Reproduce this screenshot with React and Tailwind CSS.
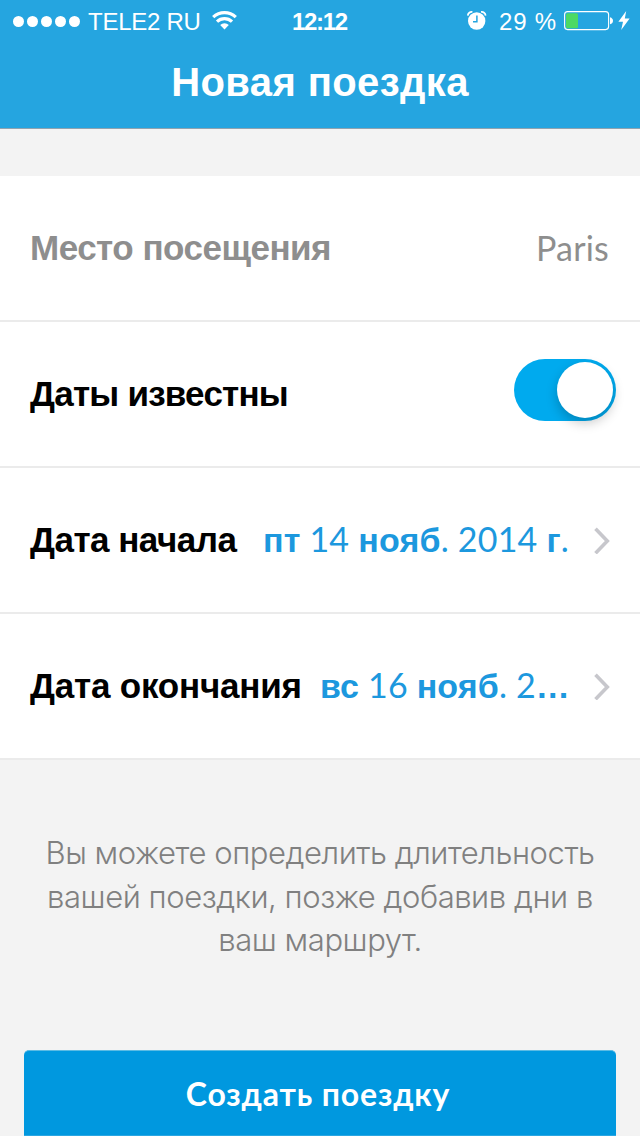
import { useState } from "react";

const carrierDots = [1, 2, 3, 4, 5];

function WifiIcon() {
  return (
    <svg width="26" height="20" viewBox="0 0 26 20" fill="none" stroke="white">
      <path d="M1.2 6.2 A16.4 16.4 0 0 1 23.8 6.2" strokeWidth="3.2" />
      <path d="M5 10.6 A10.8 10.8 0 0 1 20 10.6" strokeWidth="3.2" />
      <path d="M12.5 18.4 L8.2 14 A6 6 0 0 1 16.8 14 Z" fill="white" stroke="none" />
    </svg>
  );
}

function AlarmIcon() {
  return (
    <svg width="20" height="20" viewBox="0 0 20 20" fill="none">
      <circle cx="9.7" cy="10" r="8.7" fill="white" />
      <path d="M9.9 4.6 V10.8 H6" stroke="#25a5e0" strokeWidth="1.5" />
      <path d="M0.8 4.6 A4 4 0 0 1 5.4 0.9" stroke="white" strokeWidth="1.7" />
      <path d="M18.6 4.6 A4 4 0 0 0 14 0.9" stroke="white" strokeWidth="1.7" />
    </svg>
  );
}

function BatteryIcon() {
  return (
    <svg width="50" height="20" viewBox="0 0 50 20" fill="none">
      <rect x="0.6" y="0.6" width="44" height="18" rx="3" stroke="white" strokeWidth="1.1" />
      <rect x="2" y="2.2" width="12" height="15" rx="1.5" fill="#4cd964" />
      <path d="M46 6.2 Q49 7.2 49 9.7 Q49 12.2 46 13.2 Z" fill="white" />
    </svg>
  );
}

function BoltIcon() {
  return (
    <svg width="12" height="20" viewBox="0 0 12 20" fill="white">
      <path d="M8.2 0 L0.4 10.8 H5 L3.2 19 L11.6 7.6 H6.8 Z" />
    </svg>
  );
}

function Chevron() {
  return (
    <svg width="18" height="28" viewBox="0 0 18 28" fill="none">
      <path d="M2.5 2.8 L14.3 15 L2.5 27.2" stroke="#c7c7cc" strokeWidth="3.6" />
    </svg>
  );
}

function StatusBar() {
  return (
    <div className="grid h-10 grid-cols-[292px_56px_1fr] items-center text-[24px] leading-10">
      <div className="flex items-center pl-[13px]">
        <div className="flex gap-[3px]">
          {carrierDots.map((d) => (
            <span key={d} className="size-[11px] rounded-full bg-white" />
          ))}
        </div>
        <span className="ml-2 pt-0.5 whitespace-nowrap tracking-[-0.25px]">TELE2 RU</span>
        <span className="ml-[11px]">
          <WifiIcon />
        </span>
      </div>
      <span className="pt-0.5 font-bold tracking-[-1.3px]">12:12</span>
      <div className="flex items-center justify-end pr-[10px]">
        <AlarmIcon />
        <span className="mr-[7px] ml-3 pt-0.5 whitespace-nowrap tracking-[0.8px]">29 %</span>
        <BatteryIcon />
        <span className="ml-1">
          <BoltIcon />
        </span>
      </div>
    </div>
  );
}

function Row({ label, labelClass, children }) {
  return (
    <div className="flex h-[146px] items-center border-b-2 border-[#ebebeb] bg-white pl-[30px]">
      <span className={`whitespace-nowrap text-[35px] font-bold ${labelClass}`}>{label}</span>
      {children}
    </div>
  );
}

export default function App() {
  const [datesKnown, setDatesKnown] = useState(true);

  return (
    <div className="flex h-[1136px] w-[640px] flex-col overflow-hidden bg-[#f3f3f3] font-['Liberation_Sans',sans-serif]">
      <header className="h-[129px] border-b border-[#8fa3b0] bg-[#25a5e0] text-white">
        <StatusBar />
        <h1 className="pt-[18px] text-center text-[40px] leading-[48px] font-bold tracking-[0.4px]">
          Новая поездка
        </h1>
      </header>

      <main className="mt-[47px]">
        <Row label="Место посещения" labelClass="tracking-[-0.5px] text-[#8e8e8e]">
          <span className="ml-auto pr-[31px] pb-0.5 font-['Lato',sans-serif] text-[34px] tracking-[0.2px] text-[#8e8e8e]">
            Paris
          </span>
        </Row>

        <Row label="Даты известны" labelClass="tracking-[-0.75px] text-black">
          <button
            role="switch"
            aria-checked={datesKnown}
            onClick={() => setDatesKnown(!datesKnown)}
            className={`mr-6 mb-2 ml-auto flex h-[62px] w-[102px] items-center rounded-full px-[3px] ${
              datesKnown ? "justify-end bg-[#00aaee]" : "justify-start bg-gray-200"
            }`}
          >
            <span className="size-14 rounded-full bg-white shadow-[0_5px_12px_rgba(0,0,0,0.22)]" />
          </button>
        </Row>

        <Row label="Дата начала" labelClass="tracking-[-0.5px] text-black">
          <span className="ml-auto pb-px font-['Lato',sans-serif] text-[34px] tracking-[0.2px] whitespace-pre text-[#1c98de]">
            <b className="font-['Liberation_Sans']">пт</b> 14{" "}
            <b className="font-['Liberation_Sans']">нояб</b>. 2014{" "}
            <b className="font-['Liberation_Sans']">г</b>.
          </span>
          <span className="mr-[29px] ml-6">
            <Chevron />
          </span>
        </Row>

        <Row label="Дата окончания" labelClass="tracking-[-0.2px] text-black">
          <span className="ml-auto pb-px font-['Lato',sans-serif] text-[34px] tracking-[0.15px] whitespace-pre text-[#1c98de]">
            <b className="font-['Liberation_Sans']">вс</b> 16{" "}
            <b className="font-['Liberation_Sans']">нояб</b>. 2
            <span className="font-['Liberation_Sans'] font-bold">…</span>
          </span>
          <span className="mr-[29px] ml-[23px]">
            <Chevron />
          </span>
        </Row>
      </main>

      <p className="mt-[71px] text-center font-['Inter',sans-serif] text-[31px] leading-[43.5px] font-light tracking-[-0.45px] text-[#808080]">
        Вы можете определить длительность
        <br />
        вашей поездки, позже добавив дни в
        <br />
        ваш маршрут.
      </p>

      <button className="mx-6 mt-auto h-[86px] rounded-t-[5px] border-t border-b border-t-[#5cbbe4] border-b-[#2aa6e2] bg-[#0098df] pt-0.5 pr-1 font-['Lato',sans-serif] text-[32px] font-bold tracking-[0.85px] text-white">
        Создать поездку
      </button>
    </div>
  );
}
